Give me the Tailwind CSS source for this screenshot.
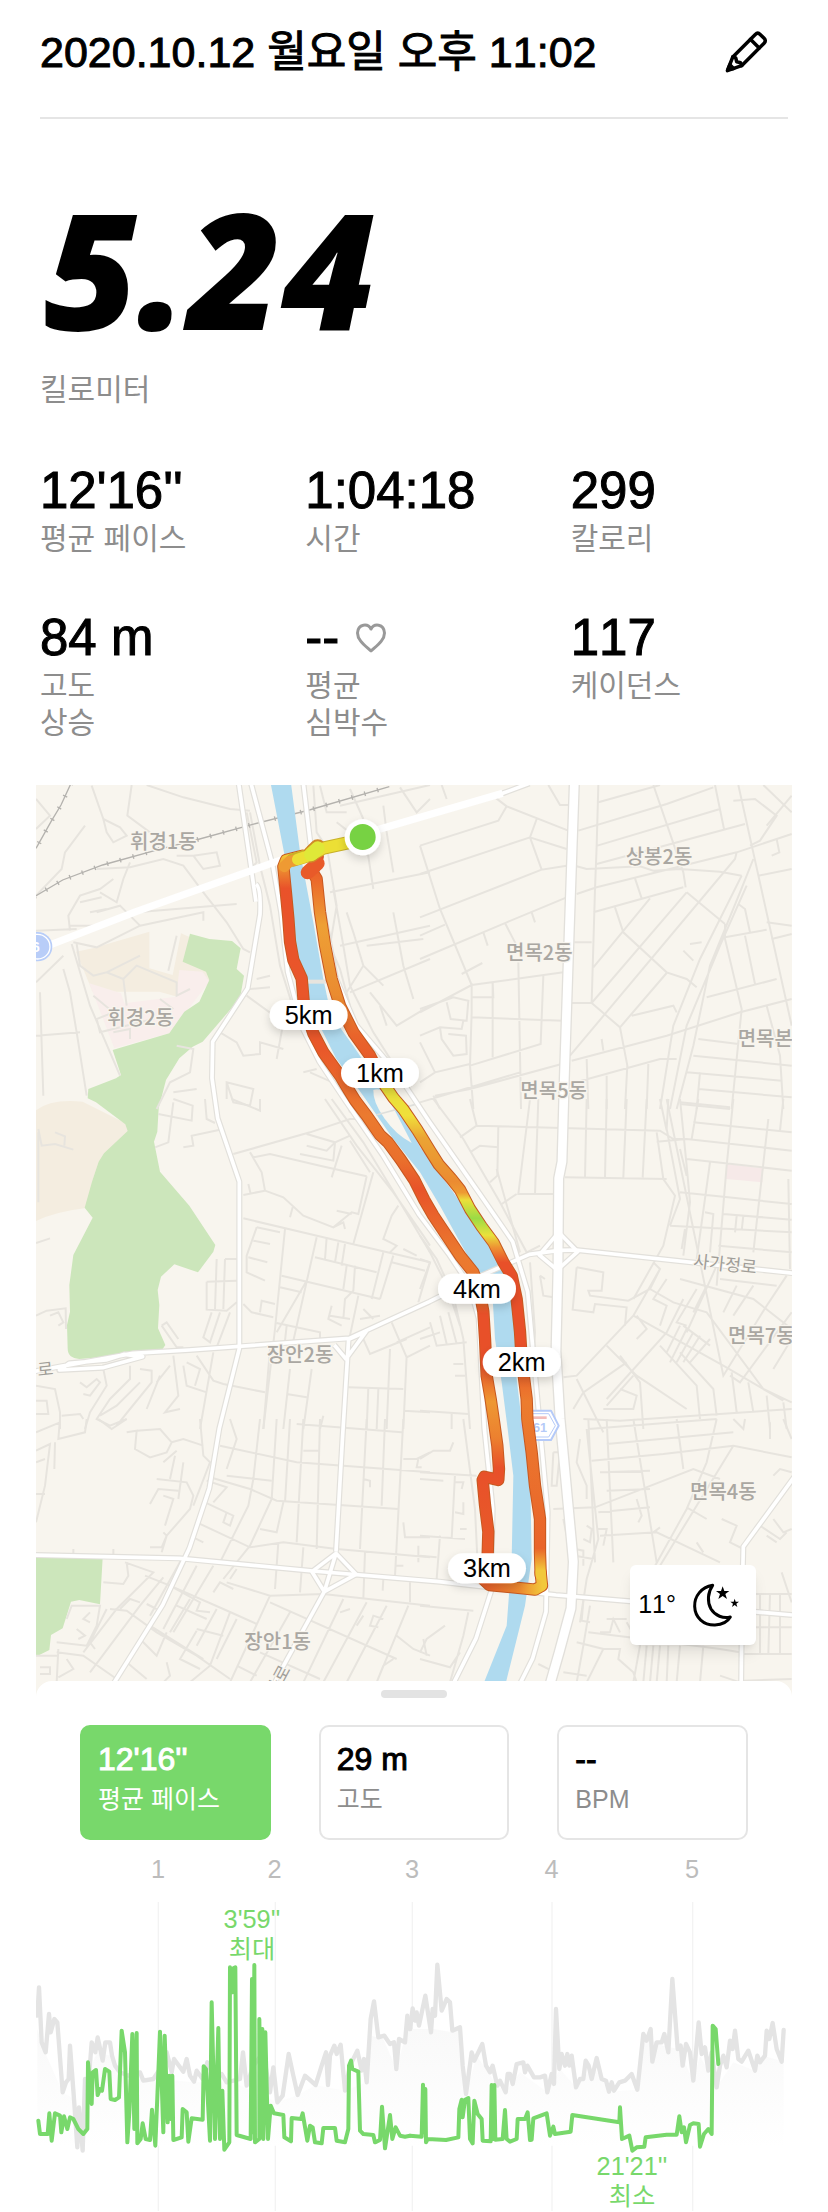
<!DOCTYPE html>
<html lang="ko">
  <head>
    <meta charset="UTF-8" />
    <meta name="viewport" content="width=device-width, initial-scale=1.0" />
    <title>러닝 기록</title>
    <script src="https://cdn.jsdelivr.net/npm/@tailwindcss/browser@4"></script>
  </head>
  <body class="bg-white text-black [font-kerning:none] font-['Liberation_Sans','Noto_Sans_CJK_KR',sans-serif]">
    <header class="mx-10 pt-[26px] pb-[39px] flex items-center justify-between border-b-2 border-[#e5e5e5]">
      <h1 class="text-[43px] leading-[52px] [-webkit-text-stroke:1px_black]">2020.10.12 월요일 오후 11:02</h1>
      <button type="button" aria-label="편집" class="mr-5">
        <svg class="w-11 h-11" viewBox="-1 -1 45 44" fill="none" stroke="black" stroke-width="3.6" stroke-linejoin="round" stroke-linecap="round">
          <path d="M2.5 40 8 26 31 3q2.500-2.500 5 0l4 4q2.500 2.500 0 5L17 35Z" />
          <path d="M26 8l9 9M8 26l3 1 1 4 4 1 1 3" />
          <path d="M3 39l2-5 4 4Z" fill="black" />
        </svg>
      </button>
    </header>

    <main>
      <section class="px-10">
        <p class="mt-[63px] pl-1 text-[162px] leading-[170px] font-extrabold italic font-['Open_Sans',sans-serif]">5.24</p>
        <p class="mt-5 text-[30px] leading-9 text-[#8d8d8d]">킬로미터</p>

        <dl class="mt-[54px] pb-11 grid grid-cols-3 gap-x-12 gap-y-13">
          <div class="flex flex-col-reverse justify-end">
            <dt class="text-[30px] leading-[37px] text-[#8d8d8d]">평균 페이스</dt>
            <dd class="text-[51px] leading-[58px] [-webkit-text-stroke:1px_black]">12'16''</dd>
          </div>
          <div class="flex flex-col-reverse justify-end">
            <dt class="text-[30px] leading-[37px] text-[#8d8d8d]">시간</dt>
            <dd class="text-[51px] leading-[58px] [-webkit-text-stroke:1px_black]">1:04:18</dd>
          </div>
          <div class="flex flex-col-reverse justify-end">
            <dt class="text-[30px] leading-[37px] text-[#8d8d8d]">칼로리</dt>
            <dd class="text-[51px] leading-[58px] [-webkit-text-stroke:1px_black]">299</dd>
          </div>
          <div class="flex flex-col-reverse justify-end">
            <dt class="text-[30px] leading-[37px] text-[#8d8d8d]">고도<br />상승</dt>
            <dd class="text-[51px] leading-[58px] [-webkit-text-stroke:1px_black]">84 m</dd>
          </div>
          <div class="flex flex-col-reverse justify-end">
            <dt class="text-[30px] leading-[37px] text-[#8d8d8d]">평균<br />심박수</dt>
            <dd class="flex items-center gap-4 text-[51px] leading-[58px] [-webkit-text-stroke:1px_black]">
              --
              <svg class="w-8 h-8" viewBox="0 0 32 32" fill="none" stroke="#999" stroke-width="3" stroke-linejoin="round">
                <path d="M16 7C13 1 3 1.500 2.500 11c0 7 7 12 13.500 18C22.500 23 29.500 18 29.500 11 29 1.500 19 1 16 7Z" />
              </svg>
            </dd>
          </div>
          <div class="flex flex-col-reverse justify-end">
            <dt class="text-[30px] leading-[37px] text-[#8d8d8d]">케이던스</dt>
            <dd class="text-[51px] leading-[58px] [-webkit-text-stroke:1px_black]">117</dd>
          </div>
        </dl>
      </section>

      <section class="relative mx-9" aria-label="러닝 경로">
        <svg class="block w-full h-auto bg-[#f8f5ee]" viewBox="0 0 2268 2736">
          <defs>
            <linearGradient id="left" gradientUnits="userSpaceOnUse" x1="0" y1="200" x2="0" y2="2400">
              <stop offset="0" stop-color="#f2d63a" />
              <stop offset=".025" stop-color="#ec8a30" />
              <stop offset=".05" stop-color="#e9522a" />
              <stop offset=".27" stop-color="#e9582a" />
              <stop offset=".36" stop-color="#eb7a2f" />
              <stop offset=".42" stop-color="#ea702c" />
              <stop offset=".46" stop-color="#e85329" />
              <stop offset=".55" stop-color="#eb7a2f" />
              <stop offset=".61" stop-color="#ec752d" />
              <stop offset=".63" stop-color="#e85029" />
              <stop offset=".7" stop-color="#e85029" />
              <stop offset=".75" stop-color="#ee9833" />
              <stop offset=".8" stop-color="#ec802f" />
              <stop offset=".84" stop-color="#e85029" />
              <stop offset="1" stop-color="#e8602a" />
            </linearGradient>
            <linearGradient id="right" gradientUnits="userSpaceOnUse" x1="0" y1="200" x2="0" y2="2400">
              <stop offset="0" stop-color="#e85029" />
              <stop offset=".04" stop-color="#eb6a2b" />
              <stop offset=".1" stop-color="#eea035" />
              <stop offset=".2" stop-color="#ea8a30" />
              <stop offset=".25" stop-color="#e9642b" />
              <stop offset=".29" stop-color="#e85a29" />
              <stop offset=".325" stop-color="#e8e03a" />
              <stop offset=".36" stop-color="#f0e03a" />
              <stop offset=".39" stop-color="#eba434" />
              <stop offset=".45" stop-color="#eb8b31" />
              <stop offset=".465" stop-color="#ee9a33" />
              <stop offset=".475" stop-color="#ecdf3b" />
              <stop offset=".5" stop-color="#9bdb45" />
              <stop offset=".523" stop-color="#e9e23b" />
              <stop offset=".54" stop-color="#ee9133" />
              <stop offset=".56" stop-color="#e85029" />
              <stop offset=".68" stop-color="#e85029" />
              <stop offset=".75" stop-color="#ec7c2e" />
              <stop offset=".95" stop-color="#e9642b" />
              <stop offset=".98" stop-color="#f2c83a" />
            </linearGradient>
            <linearGradient id="bottom" gradientUnits="userSpaceOnUse" x1="1350" y1="0" x2="1520" y2="0">
              <stop offset="0" stop-color="#e8602a" />
              <stop offset=".6" stop-color="#ed8a2f" />
              <stop offset="1" stop-color="#f2c83a" />
            </linearGradient>
            <filter id="soft" x="-20%" y="-30%" width="140%" height="190%">
              <feDropShadow dx="0" dy="12" stdDeviation="12" flood-color="#000" flood-opacity=".16" />
            </filter>

            <g id="highways">
              <path d="M608-5 660 350 M645-5 710 240 735 380 755 560 800 730 850 830 930 950 1040 1110 1150 1290 1240 1410 1300 1500 1328 1600 1345 1930 1370 2170 1365 2420 1320 2560 1230 2740" />
              <path d="M802-5 825 190 870 420 900 580 960 720 1080 860 1180 1010 1330 1225 1430 1370 1475 1520 1505 1850 1535 2180 1530 2480 1490 2620 1430 2740" />
              <path d="M-10 500 300 380 720 230 1040 130 1400 25 1480-5" />
              <path d="M660 298q15 10 12 90L635 610 530 770 528 880 545 1000 610 1190 610 1690 550 1930 520 2110 460 2290 380 2460 230 2700" />
              <path d="M-10 1760 70 1745 290 1705 460 1695 940 1660 1180 1550 1340 1470 1480 1408 1570 1396 1620 1395 2275 1465 M70 1755 100 1735 210 1725 265 1708 320 1715 200 1748Z" />
              <path d="M940 1662 990 1640 930 1722 895 1680 M938 1660 920 1950 900 2300" />
              <path d="M-10 2310 430 2320 830 2358 1210 2390 1560 2430 2268 2490" />
              <path d="M828 2360 900 2305 960 2368 865 2420Z M900 2305 865 2420 730 2665 690 2750" />
              <path d="M1568 1342 1510 1410 1564 1455 1625 1400Z" />
              <path d="M2275 2075 2122 2285 2118 2460 2115 2740" />
            </g>
            <path id="arterial" d="M1615-5 1600 430 1585 880 1578 1130 1568 1180 1566 1450 1560 1700 1572 1900 1600 2200 1612 2330 1605 2470 1570 2600 1530 2740" />

            <path id="route-left" d="M800 212 750 225 742 245 750 325 757 400 762 470 772 525 797 580 804 660 832 745 862 802 912 872 938 915 958 947 992 992 1032 1050 1056 1072 1095 1125 1135 1185 1165 1245 1192 1292 1232 1352 1272 1412 1312 1462 1328 1505 1342 1580 1347 1660 1352 1772 1364 1842 1374 1910 1384 1982 1389 2052 1387 2085 1345 2075 1340 2085 1347 2160 1357 2240 1355 2310 1344 2375" />
            <path id="route-bottom" d="M1344 2385 1360 2400 1497 2414 1518 2402 1514 2362" />
            <path id="route-right" d="M830 195 845 215 830 262 842 282 852 382 867 480 887 582 912 662 952 742 1002 812 1046 900 1072 938 1102 973 1144 1035 1184 1100 1208 1138 1245 1180 1272 1214 1302 1272 1337 1325 1372 1372 1402 1432 1427 1472 1442 1542 1452 1640 1457 1722 1472 1842 1474 1902 1487 2002 1497 2102 1512 2202 1512 2302 1514 2370" />
          </defs>

          <!-- parks and blocks -->
          <path d="M170 490 340 440 340 550 410 570 435 445 560 500 515 600 440 640 370 620 170 620 120 500Z" fill="#f4ede0" />
          <path d="M160 595 255 625 265 655 420 635 430 555 500 560 520 590 400 745 235 790Z" fill="#f9eeec" />
          <path d="M-5 980Q40 940 140 950L290 1025 200 1200 145 1270Q60 1280-5 1310Z" fill="#f4ede0" />
          <path d="M462 446 520 462 588 468 614 490 602 552 624 572 612 640 500 770 470 785 430 820 390 885 368 970 364 1040 354 1070 372 1160 460 1262 538 1380 532 1400 486 1462 415 1438 375 1475 365 1515 370 1560 366 1630 388 1680 380 1692 310 1700 215 1715 130 1722Q95 1720 95 1690L93 1620 102 1580 100 1500 112 1410 170 1298 146 1268 168 1190 188 1130 204 1105 275 1038 268 1018 180 952 155 940 157 912 240 880 255 870 230 795 400 745 445 680 490 650 520 585 510 560 440 530Z" fill="#cce6bb" />
          <path d="M-5 2318H200L192 2458 130 2445 105 2450 80 2530 45 2550 40 2595 10 2610-5 2610Z" fill="#cce6bb" />
          <path d="M2072 1137 2180 1150 2180 1192 2070 1182Z" fill="#f6e9e8" />

          <!-- side streets -->
          <g fill="none" stroke="#e7e4de" stroke-width="6">
            <g transform="translate(-18 -18)">
              <path d="M18 60 60 110 18 150M185 20 220 120 230 160 250 190 290 170 270 145 220 120M305 18 292 110 360 160M350 18 460 55 600 90 660 95M165 140 105 220 95 270 18 350M200 270 300 265 400 240 460 260 520 340 590 430 640 510 660 520M120 455 115 410 150 350 210 330 250 300M210 340 260 370 280 300 300 250M150 370 215 355M180 400 230 390M120 440 210 440 320 400 620 375M18 455 140 450M130 490 200 505 330 440 520 400 520 425M330 440 270 380 200 400M490 230 560 220 570 260 520 270 490 230 440 230M650 100 680 250 640 290M660 100 690 260 720 380 750 560 800 720 860 830 920 930 990 1020" />
              <path d="M125 495 180 680 270 890M140 495 150 560 190 590 230 580 280 600 290 680M230 580 330 530M280 600 320 560 440 610 440 650 480 630M440 470 415 575M18 610 100 530M100 570 120 640 140 760 170 950M18 770 150 760M30 640 40 950M190 650 250 700 200 720 210 760 370 720M250 760 300 750 300 780M390 660 430 690M680 600 720 590M660 630 720 625M650 650 760 730 740 840M570 760 620 790 640 830 690 825 690 790 760 810M380 990 420 910 480 880 490 810 440 800M430 940 500 930M590 910 610 970 660 980 670 930 590 910 590 960M840 880 930 920 960 1000M820 880 860 870" />
              <path d="M850 20 860 160 880 190M870 20 890 100 950 100M930 80 1200 18M960 30 1000 120M1110 25 1160 100 1200 60M900 340 1200 280M1060 80 1070 160 1090 280M920 130 1010 200 1030 330M930 500 1200 440M950 400 970 460 1000 560 950 640M1090 400 1120 560 1150 660M1010 500 1180 480M960 640 1200 540M1020 640 1100 740 1200 680M1050 680 1070 740M1000 560 1060 620M910 330 940 500 960 620 1030 760 1100 870 1170 990M890 200 920 380 900 500 930 570 960 680" />
            </g>
            <g transform="translate(1152 -18)">
              <path d="M0 200 235 125 260 82 225 55M260 82 445 155M350 120 330 175 440 210M330 175 0 285M330 175 365 272 440 260M365 272 0 415M440 355 260 430 0 540M0 200 60 390 155 618M0 470 75 437M155 618 430 580M335 400 345 430M255 432 290 500M190 460 203 500M125 585 187 552M0 700 155 618 155 700 150 860 160 990M155 655 220 655 218 610 218 835M295 550 303 990M370 590 362 795 150 860M155 715 430 725M0 690 100 655 145 665 140 725 92 720 80 670M0 770 60 745 125 750 130 725M60 745 65 780 100 830 140 825 138 770 85 765M0 910 45 880 150 855M45 880 0 790M45 950 150 930 425 855M0 970 300 880M40 950 60 990M385 18 420 78 445 78M65 18 80 60" />
              <path d="M535 18 530 200 525 330 515 670M535 70 720 18M475 155 740 75 880 25M532 200 900 90M530 255 975 135M470 262 500 270 660 262 700 275 780 270 900 278 965 290M700 18 790 280 797 325M885 18 912 150M955 18 1115 740M470 345 530 325 950 220 1115 165M520 400 790 325M645 298 665 358M585 385 610 460 740 580 800 600 830 625M690 358 520 565M800 340 515 672 450 672M800 340 915 435M950 220 945 240 450 830M740 582 600 745 515 672M600 745 622 860 615 990M463 490 515 490M455 845 740 770 960 700 1115 660M545 780 550 815M500 840 505 990M430 920 720 840 770 840M560 890 560 990M685 855 680 990M635 710 760 680 770 700" />
              <path d="M965 290 840 540 760 740 720 990M980 320 900 500 800 740 750 990M1000 240 960 340 870 560 820 800 770 990M915 435 915 480 965 690 935 990M915 475 1040 452M975 470 1005 615M860 655 1070 600M955 375 975 390 990 460M1015 290 1115 270M940 65 1005 60 1070 110 1020 185 990 200M1030 18 1115 100M1115 50 1040 140M1070 180 1078 220 1055 230M1040 430 1115 440M1055 480 1115 465M1040 680 1080 830 1090 990M835 780 955 795M820 830 1115 860M800 880 1085 905M835 930 1115 955M840 880 830 990M780 970 930 985M810 495 845 490M790 515 820 545" />
            </g>
            <g transform="translate(-18 942)">
              <path d="M25 90 35 140 75 135 130 152M75 100 105 112 103 140M25 100 25 310M18 432 60 418M18 650 50 635 107 628 108 690M60 650 85 640 100 670 85 680M385 45 485 65 488 20 430 0M430 10 415 130 375 145M525 0 530 60 555 72M605 0 690 35 690 0M460 145 490 140 485 110 570 92M610 165 840 100 960 60 980 60M660 160 670 175 720 165 870 200 1010 232M660 160 695 220 705 275 640 288M705 275 760 295 820 350 910 385 965 340 985 345 1010 232M910 385 940 370 945 390M655 255 662 285M788 325 780 355M830 105 915 130 960 110M915 130 890 155 830 140M935 140 905 235M810 165 910 185 915 130M640 358 880 415 1200 490M1030 220 970 435M920 335 965 345" />
              <path d="M680 385 750 400M680 385 650 470 650 520 705 545M670 425 720 435M655 475 712 490M765 390 735 690 700 990M860 415 790 725M855 475 960 500 1040 520M890 415 885 480M925 430 915 490M945 435 935 500M755 530 1050 600M750 565 815 580M830 545 740 700M950 500 940 570M975 500 970 575 945 600 940 660M1060 460 1025 600M1090 470 1050 600M1085 490 1185 515M1105 320 1085 350 1060 420 1100 440 1080 460M1120 450 1160 470M1200 490 1165 610M985 590 960 710M640 615 665 640 730 655M690 640 695 605 735 615M905 620 895 660 935 680M900 650 960 660M1000 630 1030 660M990 660 1050 650M740 672 870 700 870 720M770 680 765 725M560 480 555 630M585 480 620 480M585 480 580 630M530 548 620 545M530 548 530 632 590 635 620 610M545 640 520 715 540 730 570 640M600 640 560 745M395 680 440 745 460 745M395 680 410 670 445 720" />
              <path d="M885 0 980 140 1090 280 1180 410 1200 440M905 0 1000 130 1110 310 1200 460M960 125 1020 220M18 860 75 870 90 940 90 990M18 905 50 905 55 945 18 945M95 950 150 945 160 960M150 850 170 865 200 840 210 850 180 890 160 885M220 810 230 860 180 940 165 990M300 800 300 840 240 900 200 960 240 980 290 960M330 850 260 920 210 950M330 810 365 815 365 850 300 930 260 980M380 850 420 800M390 830 350 930M430 770 445 890 405 940 450 930M460 800 470 860 530 880M470 790 510 810 495 860M550 760 510 990M500 770 550 845 580 855 705 880M780 810 760 990M720 750 700 990M845 810 820 990M770 885 830 895M880 950 870 990M955 865 1120 870M1015 865 1010 990M1045 870 1040 990M1080 750 1070 990M1130 770 1120 990M1000 720 1020 765 1130 720M1085 670 1130 775 1200 740M1100 730 1200 685M1120 935 1200 940" />
            </g>
            <g transform="translate(1152 942)">
              <path d="M40 0 130 120 240 310 320 460 360 440M150 0 170 80 120 115M170 80 720 95 760 120 800 120M330 0 295 285 410 285M355 0 345 285M235 80 232 230 210 250M150 160 180 140 235 145M245 315 290 285M500 0 495 235M560 0 555 235M620 0 610 235M680 0 668 235M435 235 740 240M720 0 740 95M745 0 740 90 780 300 750 380M710 100 730 240 765 290 730 440 640 600M780 0 800 200 810 310 790 470M835 0 815 120M940 0 920 200 890 560M1045 60 1000 460M1090 0 1080 95M780 15 930 30M820 70 1115 100M710 128 800 120 1115 155M800 180 1115 215M780 280 1115 315M910 345 1115 362M750 380 1115 400M895 440 1115 460M870 190 830 480M855 340 880 345 870 460M950 350 945 400M970 350 965 395M1105 240 1110 510M780 150 800 230M795 390 785 450" />
              <path d="M470 505 550 520 545 575 505 575 510 590 625 605 690 570 720 510 700 490M470 505 458 632 520 640 525 615 620 625 615 680M720 510 640 650 470 830 430 835M690 570 760 610 860 640 1030 870 1115 910M640 650 910 800 1090 905M740 540 700 600 740 620 720 680M780 540 1000 600 1115 690M790 600 740 700 560 900M830 570 770 670 800 680M860 560 820 640M890 500 800 700M900 540 1070 560M1100 530 1040 620 910 830 740 0M1000 560 940 650M950 560 910 640M780 680 740 760M800 690 750 790M820 700 770 790M840 710 790 790M870 720 810 790M790 680 870 740M470 840 500 900 550 1000M560 740 650 830 800 930M600 770 660 850 670 990M720 740 830 860 840 960M780 760 880 870 890 950M640 830 560 920M650 650 680 690 650 720M460 930 490 880 620 790M1115 640 960 850 930 830M1060 810 1115 720M490 960 600 965 1115 930M1040 890 1050 990M1090 910 1100 990M550 930 640 930 650 890 600 870M985 850 1000 940M935 820 950 940" />
              <path d="M0 410 50 480 100 590 130 720 150 990M20 440 80 560 120 680M0 480 30 490 0 570M30 670 50 740 140 730M0 720 60 700M60 650 80 735M85 640 110 735M100 795 130 795M105 830 135 830M0 935 145 945M95 945 95 990M330 490 345 700 340 820M360 530 370 590 400 595M375 540 360 530M230 210 300 460 260 400" />
            </g>
            <g transform="translate(-18 1902)">
              <path d="M18 40 90 10M90 0 85 60 165 40 170 0M18 95 60 75 45 200 18 310M75 70 73 150M45 120 18 130M45 225 18 225M205 0 245 30 290 0M320 35 390 30 425 70 410 100 360 115 315 90 320 35 290 40M425 70 460 60 520 80M400 130 440 95M420 180 435 110M380 180 470 190 490 230 480 270 410 350 395 400M460 130 445 240M360 255 385 210 445 215M400 230 430 240 405 320M510 0 520 110 540 130 490 260M130 390 130 405M250 390 250 405M400 340 410 350 395 385 360 385M600 0 620 60 590 150M570 80 800 130 1200 160M540 175 660 210 740 245 1105 270M530 185 590 205 550 250M590 170 725 185M690 0 670 180 655 260 570 430M740 0 725 240 660 380 580 480M780 0 765 250M820 0 800 370M870 0 860 390M500 310 660 385 760 370 920 390 1200 415M525 250 610 290 600 320 580 310 590 280M490 355 520 370M690 330 740 340 760 250M745 370 735 510M1010 0 990 390M1065 0 1055 260M1120 0 1095 470M800 15 1115 40M820 95 870 95M1120 120 1160 120 1200 100M1165 120 1160 145 1175 145M1120 310 1125 355 1200 355M1000 180 1020 185 1020 205M1165 380 1165 430M1095 440 1120 440M820 385 810 520M1005 400 1000 540M1060 480 1058 515M1140 490 1140 550" />
              <path d="M285 430 370 460 260 570 160 700M290 430 295 470 280 495 220 490M345 470 420 500 580 570 680 615M400 475 330 560 180 760M420 500 510 550 500 575 540 580M455 420 360 590M500 440 400 630M550 440 430 640M590 490 720 530 880 525 1200 560M600 480 620 450M550 520 570 490 610 510M240 570 290 575 380 640 500 710 600 780M270 570 300 540 330 550M350 555 380 570M360 620 520 720M440 560 530 600M480 540 420 640M560 570 500 680M600 580 540 740 480 790M500 630 580 650M500 635 450 720 510 750M620 600 560 720M720 530 600 790M720 550 1100 720M780 580 660 790M940 540 820 790M1010 550 880 790M1070 560 950 790M1135 560 1040 790M330 660 380 710 410 640M290 730 350 780M410 730 420 770 400 790M80 700 160 710 260 780M85 690 80 790M18 710 85 710M110 600 125 560 210 560 200 620 170 680 80 670M180 580 160 600 180 610M140 630 165 650 145 660M195 690 180 670 230 570M30 745 60 745 60 765 30 765M110 720 130 750 85 775M960 570 930 580M1000 590 980 620M1060 600 1030 590 1020 620 1045 625M1100 650 1150 690 1200 710M1180 660 1190 710M620 740 680 770M690 700 870 780M1090 720 1060 740 1040 790" />
            </g>
            <g transform="translate(1152 1902)">
              <path d="M130 0 165 270 175 480M0 120 40 95 90 95 100 70M0 160 170 170M0 180 70 185M105 165 95 360M105 190 130 190 125 210M105 280 130 285 130 250M0 350 135 360M60 350 50 480M140 330 120 330M0 410 50 415M0 560 160 575M75 620 20 660 0 700M0 720 90 745 120 700M145 580 130 650 90 790M400 100 420 100 410 200 395 200 400 100M480 60 470 130 500 200 500 240M500 30 535 360 500 480 480 610M505 0 525 430M560 0 580 430M640 0 710 430M770 0 790 150M890 0 860 130 800 270 700 450M940 80 720 440M505 30 890 0M560 75 940 40M515 125 730 105 940 80 1115 115M400 270 525 265 820 150 900 180M540 160 690 155M560 215 690 210M535 280 690 265M530 330 560 330 550 380M540 350 710 340 900 430M800 265 860 300M700 340 720 325M500 320 515 330 510 370 490 360M465 410 520 420M465 390 490 395 490 440M650 240 665 290 655 310M940 0 970 30 975 0M1050 10 1050 60M1090 0 1115 60M1060 170 1080 150 1115 160M1020 320 1080 360 1100 340M1040 350 1070 370M905 300 950 320 930 370 970 390M1060 300 1090 340 1115 330M830 370 850 400M1085 460 1115 550M970 525 1115 525M970 625 1115 625M970 705 1115 705M970 785 1115 780M1020 525 1020 705M1050 525 1045 705M1080 525 1080 705" />
              <path d="M490 545 485 605 510 610M560 600 620 600M510 560 490 680 470 790M505 640 627 655 900 690M470 670 550 690 500 790M550 690 600 690 595 720 640 760 650 790M620 610 660 680 640 790M430 760 500 770M680 680 670 790M700 680 690 790M720 680 710 790M745 680 740 790M355 735 395 755M780 680 770 790M850 680 840 790M900 690 960 700M900 770 960 790M540 640 570 640 580 600 600 640M430 300 440 350" />
            </g>
          </g>

          <!-- railway -->
          <g fill="none" stroke="#b4b2ae">
            <path d="M105-5 75 60 45 110 0 190" stroke-width="4" />
            <path d="M-5 335 80 285 200 240 380 190 480 165 650 118 820 75 1060 5" stroke-width="4" />
            <path d="M105-5 75 60 45 110 0 190M-5 335 80 285 200 240 380 190 480 165 650 118 820 75 1060 5" stroke-width="14" stroke-dasharray="4 36" />
          </g>

          <!-- river -->
          <path d="M704-5 765-5 792 200 832 412 862 582 885 690 950 780 1025 890 1100 990 1152 1085 1252 1222 1352 1372 1384 1432 1422 1502 1432 1580 1442 1782 1460 1932 1482 2032 1487 2322 1467 2462 1398 2740H1325L1412 2522 1427 2322 1432 2072 1415 1932 1397 1792 1377 1662 1370 1540 1312 1442 1272 1372 1212 1262 1152 1162 1070 1060 980 930 900 820 820 660 780 480 744 202Z" fill="#afdaef" />
          <path d="M1012 915Q1035 905 1055 935L1127 1074Q1080 1050 1045 1000Q1010 950 1012 915Z" fill="#f8f5ee" />
          <path d="M812 590H870" stroke="#e7e4de" stroke-width="12" />
          <path d="M1020 990 1150 955" stroke="#dedfdc" stroke-width="5" />

          <!-- main roads: casing, then surface -->
          <g fill="none" stroke-linejoin="round">
            <use href="#highways" stroke="#e2e0db" stroke-width="18" />
            <use href="#arterial" stroke="#e2e0db" stroke-width="34" />
            <use href="#highways" stroke="#fff" stroke-width="11" />
            <use href="#arterial" stroke="#fff" stroke-width="26" />
            <path d="M-10 500 300 380 720 230 1040 130 1400 25" stroke="#fff" stroke-width="22" />
          </g>

          <!-- road shields -->
          <circle cx="5" cy="485" r="44" fill="#b8cdf8" />
          <circle cx="5" cy="485" r="37" fill="#b8cdf8" stroke="#fff" stroke-width="4" />
          <text x="-12" y="501" class="text-[42px] font-bold fill-white">6</text>
          <path d="M1470 1877H1545L1568 1922 1545 1965H1480L1455 1922Z" fill="#fff" stroke="#b5caf8" stroke-width="6" stroke-linejoin="round" />
          <path d="M1478 1886H1538L1558 1922 1538 1956H1485L1465 1922Z" fill="none" stroke="#b5caf8" stroke-width="3" />
          <path d="M1490 1898H1532" stroke="#f3bcb9" stroke-width="8" />
          <text x="1491" y="1942" class="text-[38px] font-bold fill-[#b5caf8]">61</text>

          <!-- place names -->
          <g class="text-[60px] font-medium fill-[#aaa7a2] stroke-[#f8f5ee] stroke-[8px] [paint-order:stroke] font-['Noto_Sans_CJK_KR',sans-serif]" stroke-linejoin="round">
            <text x="382" y="192" text-anchor="middle">휘경1동</text>
            <text x="314" y="719" text-anchor="middle">휘경2동</text>
            <text x="1869" y="236" text-anchor="middle">상봉2동</text>
            <text x="1510" y="526" text-anchor="middle">면목2동</text>
            <text x="1553" y="939" text-anchor="middle">면목5동</text>
            <text x="2105" y="782">면목본동</text>
            <text x="2076" y="1674">면목7동</text>
            <text x="792" y="1732" text-anchor="middle">장안2동</text>
            <text x="2062" y="2141" text-anchor="middle">면목4동</text>
            <text x="725" y="2592" text-anchor="middle">장안1동</text>
          </g>
          <g class="text-[52px] fill-[#a09d98] stroke-[#f8f5ee] stroke-[6px] [paint-order:stroke] font-['Noto_Sans_CJK_KR',sans-serif]" stroke-linejoin="round">
            <text transform="translate(1970 1446) rotate(6)">사가정로</text>
            <text transform="translate(6 1774) rotate(-6)">로</text>
            <text transform="translate(720 2738) rotate(-62)">사로</text>
          </g>

          <!-- route -->
          <g fill="none" stroke-linecap="round" stroke-linejoin="round">
            <g stroke="#c7581f" stroke-width="37">
              <use href="#route-left" />
              <use href="#route-bottom" />
              <use href="#route-right" />
            </g>
            <use href="#route-left" stroke="url(#left)" stroke-width="31" />
            <use href="#route-bottom" stroke="url(#bottom)" stroke-width="31" />
            <use href="#route-right" stroke="url(#right)" stroke-width="31" />
            <path d="M815 262 845 235" stroke="#e85a29" stroke-width="42" />
            <path d="M770 225 830 208 860 190 950 170" stroke="#c9b028" stroke-width="40" />
            <path d="M825 208 845 188" stroke="#d08a28" stroke-width="50" />
            <path d="M745 245 760 230 790 222" stroke="#ee9a33" stroke-width="33" />
            <path d="M785 223 830 208 860 190 950 170" stroke="#ecdf35" stroke-width="34" />
            <path d="M825 208 845 190" stroke="#dfe838" stroke-width="42" />
          </g>
          <circle cx="980" cy="157" r="54" fill="#fff" filter="url(#soft)" />
          <circle cx="980" cy="156" r="39" fill="#77d243" />

          <g fill="#fff" filter="url(#soft)">
            <rect x="701" y="645" width="234" height="90" rx="45" />
            <rect x="915" y="819" width="234" height="90" rx="45" />
            <rect x="1206" y="1466" width="234" height="90" rx="45" />
            <rect x="1340" y="1686" width="234" height="90" rx="45" />
            <rect x="1236" y="2305" width="234" height="90" rx="45" />
          </g>
          <g class="text-[76px]" text-anchor="middle">
            <text x="818" y="717">5km</text>
            <text x="1032" y="891">1km</text>
            <text x="1323" y="1538">4km</text>
            <text x="1457" y="1758">2km</text>
            <text x="1353" y="2377">3km</text>
          </g>
        </svg>

        <div class="absolute right-9 bottom-13 h-20 pl-2 pr-4 flex items-center gap-4 rounded-md bg-white shadow-lg shadow-black/10">
          <span class="text-[25px]">11°</span>
          <svg class="w-12 h-11" viewBox="812 492 142 132">
            <path d="M873 499C838 505 818 532 819 562 820 596 846 619 880 618 900 617 918 608 926 594 905 600 880 590 868 570 856 548 858 520 873 499Z" fill="none" stroke="black" stroke-width="9" stroke-linejoin="round" />
            <path d="M903 502l5 14 15 0-12 9 5 15-13-9-13 9 5-15-12-9 15 0Z" />
            <path d="M939 539l3 9 10 0-8 6 3 10-8-6-8 6 3-10-8-6 10 0Z" />
          </svg>
        </div>
      </section>

      <section class="relative mx-9 -mt-4 rounded-t-2xl bg-white">
        <div class="pt-[9px] flex justify-center">
          <div class="w-[66px] h-2 rounded-full bg-[#e3e3e3]"></div>
        </div>
        <div class="mt-[27px] px-11 grid grid-cols-3 gap-12">
          <button type="button" class="h-[115px] px-4 pb-2 flex flex-col justify-center gap-1 text-left rounded-[10px] border-2 border-[#78d86b] bg-[#78d86b] text-white">
            <span class="text-[32px] leading-9 [-webkit-text-stroke:1px_white]">12'16''</span>
            <span class="text-[25px] leading-9">평균 페이스</span>
          </button>
          <button type="button" class="h-[115px] px-4 pb-2 flex flex-col justify-center gap-1 text-left rounded-[10px] border-2 border-[#e5e5e5]">
            <span class="text-[32px] leading-9 [-webkit-text-stroke:1px_black]">29 m</span>
            <span class="text-[25px] leading-9 text-[#8d8d8d]">고도</span>
          </button>
          <button type="button" class="h-[115px] px-4 pb-2 flex flex-col justify-center gap-1 text-left rounded-[10px] border-2 border-[#e5e5e5]">
            <span class="text-[32px] leading-9 [-webkit-text-stroke:1px_black]">--</span>
            <span class="text-[25px] leading-9 text-[#8d8d8d]">BPM</span>
          </button>
        </div>

        <svg class="mt-1 block w-full h-auto" viewBox="0 0 2268 1101">
          <defs>
            <linearGradient id="fade" x1="0" y1="0" x2="0" y2="1">
              <stop offset="0" stop-color="#f9f9f9" />
              <stop offset="1" stop-color="#fff" />
            </linearGradient>
          </defs>
          <g class="text-[76px] fill-[#bcbcbc]" text-anchor="middle">
            <text x="366" y="103">1</text>
            <text x="716" y="103">2</text>
            <text x="1128" y="103">3</text>
            <text x="1547" y="103">4</text>
            <text x="1968" y="103">5</text>
          </g>
          <path d="M367 174V1101M718 174V1101M1129 174V1101M1548 174V1101M1970 174V1101" stroke="#f3f3f3" stroke-width="4" />

          <!-- elevation -->
          <path transform="translate(-108 105)" d="M112 450 135 520 188 640 222 660 232 805 255 620 290 520 330 530 380 590 580 610 700 610 832 670 893 648 947 618 1035 635 1100 610 1112 470 1150 480 1189 570 1222 450 1300 450 1357 460 1380 450 1398 645 1430 530 1492 620 1517 640 1560 580 1642 640 1680 570 1728 625 1780 560 1827 638 1912 632 1935 480 1990 500 2035 510 2080 605 2100 530 2150 625 2200 550 2265 575 2290 530 2351 548V800H112Z" fill="url(#fade)" />
          <g fill="none" stroke="#e4e4e4" stroke-width="13" stroke-linejoin="round" stroke-linecap="round">
            <path transform="translate(-108 105)" d="M112 410 117 325 125 490 137 520 147 405 152 460 163 420 172 430 188 640 198 610 206 600 210 500 222 660 232 805 237 685 248 815 255 600 265 620 275 490 286 520 293 475 308 545 316 490 330 490 336 530 345 560 360 580 385 590 420 580 430 605 460 600 480 570 500 520 515 580 522 540 550 578 560 540 570 590 582 608 590 575 608 600 622 550 640 590 665 585 680 610 720 600 729 520 740 620 760 560 790 520 810 640 820 565 832 670 848 650 866 525 880 590 893 648 915 590 947 618 965 560 978 520 984 618 990 530 1003 500 1010 525 1022 497 1035 635 1050 560 1072 515 1085 575 1092 540 1100 610 1112 420 1122 367 1135 475 1153 470 1170 495 1182 490 1189 570 1197 480 1215 490 1222 410 1230 450" />
            <path transform="translate(1122 105)" d="M0 450 8 388 15 425 20 400 27 440 46 350 63 460 68 390 75 410 82 257 95 395 110 360 120 370 127 455 150 445 158 560 168 645 185 520 193 545 217 495 228 560 240 580 248 560 262 620 270 605 287 640 293 585 300 585 308 615 320 555 340 550 345 580 352 560 372 595 390 595 405 590 412 640 425 585 432 615 438 390 448 570 455 525 465 560 472 525 478 560 485 530 498 625 510 600 520 600 527 545 536 560 545 600 560 537 575 600 588 605 597 638 605 610 612 635 628 610 645 605 665 585 682 632 700 465 710 485 722 450 727 548 740 490 755 490 763 465 775 520 787 300 803 510 812 500 818 560 828 495 840 520 850 605 866 430 875 525 885 505 895 575 905 520 920 625 930 560 940 530 950 565 960 485 968 510 975 455 985 540 995 548 1015 515 1035 575 1042 530 1050 550 1065 530 1070 455 1078 480 1088 432 1100 510 1115 548 1121 453" />
          </g>

          <!-- pace -->
          <g fill="none" stroke="#78d86b" stroke-width="12" stroke-linejoin="round" stroke-linecap="round">
            <path transform="translate(-108 105)" d="M115 725 120 765 143 765 148 703 155 785 165 703 180 710 184 760 192 712 202 750 210 715 220 720 235 750 250 765 262 750 264 550 275 675 278 580 288 573 293 648 300 630 306 635 315 570 328 578 332 660 345 663 357 655 365 455 375 520 382 790 388 700 397 465 403 750 410 462 412 793 422 780 428 733 437 780 450 783 456 692 466 800 480 458 490 760 494 470 503 730 508 590 512 720 517 590 520 783 545 775 548 690 560 700 565 788 575 718 608 722 611 562 618 570 622 635 630 785 635 370 645 780 655 447 660 780 667 635 673 812 688 790 690 265 698 340 700 268 706 265 710 768 752 780 756 300 760 760 763 258 765 790 778 780 778 420 783 770 787 450 790 780 796 460 804 780 812 680 822 703 850 708 853 775 873 787 875 717 903 720 908 703 922 785 930 740 938 745 945 790 965 793 970 747 1005 747 1010 785 1035 790 1045 750 1047 560 1053 545 1057 570 1075 578 1080 755 1090 765 1120 768 1125 790 1140 783 1146 683 1155 808 1170 708 1177 780 1187 745 1200 770 1215 773 1230 770" />
            <path transform="translate(1122 105)" d="M0 770 35 773 39 617 44 760 46 630 48 790 53 780 108 783 145 775 148 690 155 662 158 715 165 662 175 657 180 780 188 793 193 665 203 705 215 720 218 785 242 787 245 618 249 780 253 618 256 782 278 780 285 693 290 780 300 788 320 780 323 720 345 720 353 700 360 783 365 782 370 718 410 703 420 770 430 743 435 765 482 758 487 708 628 730 630 685 636 780 658 770 667 815 680 805 703 803 707 775 770 767 800 767 808 712 815 760 822 745 828 790 840 738 850 733 866 735 870 803 882 765 895 750 905 765 908 440 917 450 925 555" />
          </g>
          <g class="text-[76px] fill-[#78d86b]" text-anchor="middle">
            <text x="648" y="253">3'59''</text>
            <text x="648" y="341">최대</text>
            <text x="1788" y="993">21'21''</text>
            <text x="1788" y="1082">최소</text>
          </g>
        </svg>
      </section>
    </main>
  </body>
</html>
